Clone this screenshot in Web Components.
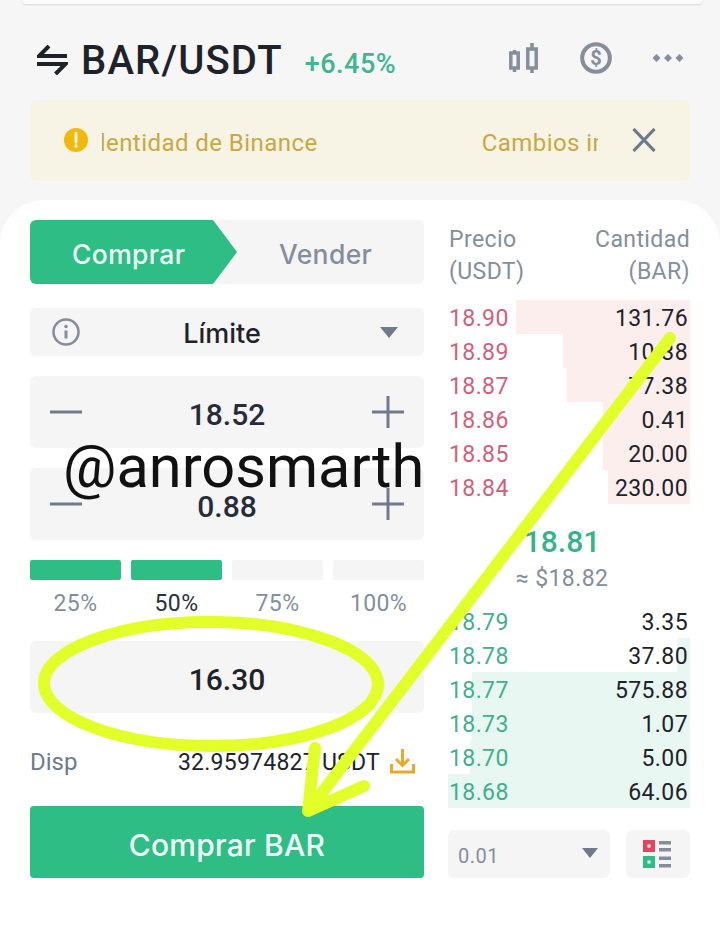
<!DOCTYPE html>
<html lang="es">
<head>
<meta charset="utf-8">
<title>BAR/USDT</title>
<style>
  html, body { margin: 0; padding: 0; background: #f6f6f7; }
  body { font-family: Roboto, "Liberation Sans", sans-serif; color: #1e2329; }
</style>
</head>
<body>
<trade-page></trade-page>

<script>
function define(name, html) {
  const tpl = document.createElement('template');
  tpl.innerHTML = html;
  customElements.define(name, class extends HTMLElement {
    connectedCallback() {
      const root = this.attachShadow({ mode: 'open' });
      root.appendChild(tpl.content.cloneNode(true));
      // attributes fill the [data-attr] holes in the template
      root.querySelectorAll('[data-attr]').forEach(n => {
        n.textContent = this.getAttribute(n.dataset.attr) || '';
      });
      if (this.hasAttribute('depth')) this.style.setProperty('--depth', this.getAttribute('depth') + 'px');
    }
  });
}

define('top-bar', `
<style>
  :host { display: flex; align-items: center; height: 40px; padding: 36px 36px 0 37px; }
  .swap { width: 31px; height: 30px; margin-right: 13px; }
  .pair { font-size: 40px; font-weight: 500; letter-spacing: 1.15px; line-height: 40px; margin-top: 2px; color: #1e2329; }
  .chg { font-size: 27px; font-weight: 500; color: #3fb68f; margin: 8px 0 0 22px; letter-spacing: .5px; }
  .icons { margin-left: auto; margin-top: -5px; display: flex; align-items: center; }
  .candle { width: 29px; height: 30px; }
  .usd { width: 32px; height: 32px; margin-left: 42px; }
  .dots { width: 32px; height: 10px; margin-left: 40px; }
</style>
<svg class="swap" viewBox="0 0 31 30" fill="none" stroke="#1e2329" stroke-width="4">
  <path d="M30 11H2L12 1"/><path d="M0 19h28.500L18.500 29"/>
</svg>
<span class="pair">BAR/USDT</span>
<span class="chg">+6.45%</span>
<div class="icons">
  <svg class="candle" viewBox="0 0 29 30" fill="none" stroke="#848e9c">
    <path d="M5.500 7v22M23 0v30" stroke-width="3.500"/>
    <rect x="1.800" y="10" width="7.400" height="15" stroke-width="3.500" fill="#f6f6f7"/>
    <rect x="18.800" y="6" width="8.400" height="19" stroke-width="3.500" fill="#f6f6f7"/>
  </svg>
  <svg class="usd" viewBox="0 0 32 32">
    <circle cx="16" cy="16" r="13.800" fill="none" stroke="#848e9c" stroke-width="4"/>
    <text x="16" y="23" font-size="20" font-family="Roboto" font-weight="700" text-anchor="middle" fill="#848e9c">$</text>
  </svg>
  <svg class="dots" viewBox="0 0 32 10" fill="#848e9c">
    <path d="M4.500 1l4 4-4 4-4-4zM16 1l4 4-4 4-4-4zM27.500 1l4 4-4 4-4-4z"/>
  </svg>
</div>
`);

define('notice-bar', `
<style>
  :host { display: flex; align-items: center; height: 81px; margin: 20px 30px 19px; padding-left: 34px; padding-right: 34px;
          background: #f7f4e5; border-radius: 6px; box-sizing: border-box; }
  .warn { width: 24px; height: 24px; flex: none; margin: -1px 14px 0 0; }
  .clip { flex: none; width: 496px; overflow: hidden; white-space: nowrap; font-size: 24px; color: #c9a842; letter-spacing: .45px; margin-top: 4px; }
  .clip span { display: inline-block; }
  .a { margin-left: -17px; }
  .b { margin-left: 164px; }
  .x { width: 24px; height: 24px; flex: none; margin: -1px 0 0 34px; }
</style>
<svg class="warn" viewBox="0 0 24 24">
  <circle cx="12" cy="12" r="12" fill="#f0b90b"/>
  <path d="M12 5v9" stroke="#f7f4e5" stroke-width="3" stroke-linecap="round"/>
  <circle cx="12" cy="18" r="1.700" fill="#f7f4e5"/>
</svg>
<div class="clip"><span class="a">Identidad de Binance</span><span class="b">Cambios importantes</span></div>
<svg class="x" viewBox="0 0 24 24" fill="none" stroke="#707a8a" stroke-width="3.2"><path d="M1.500 1l21 22M22.500 1l-21 22"/></svg>
`);

define('side-tabs', `
<style>
  :host { display: flex; height: 64px; background: #f5f5f6; border-radius: 6px; font-family: Inter, Roboto, sans-serif; font-size: 26.5px; font-weight: 500; letter-spacing: .35px; }
  .buy { width: 207px; display: flex; align-items: center; padding: 4px 0 0 42px; box-sizing: border-box; color: #f2fff9; background: #2ebd85;
         border-radius: 6px 0 0 6px; clip-path: polygon(0 0, 183px 0, 207px 50%, 183px 100%, 0 100%); }
  .sell { flex: 1; display: flex; align-items: center; padding: 4px 0 0 42px; color: #848e9c; }
</style>
<div class="buy">Comprar</div><div class="sell">Vender</div>
`);

define('type-select', `
<style>
  :host { display: flex; align-items: center; height: 48px; background: #f5f5f6; border-radius: 6px; padding: 0 26px 0 22px; font-family: Inter, Roboto, sans-serif; font-size: 27px; }
  svg.i { width: 28px; height: 28px; flex: none; }
  .t { flex: 1; text-align: center; padding-right: 16px; margin-top: 3px; font-weight: 500; color: #1e2329; }
  svg.c { width: 18px; height: 11px; flex: none; }
</style>
<svg class="i" viewBox="0 0 28 28"><circle cx="14" cy="14" r="12.500" fill="none" stroke="#848e9c" stroke-width="2.600"/><path d="M14 12.500v8" stroke="#848e9c" stroke-width="3"/><circle cx="14" cy="8.500" r="1.800" fill="#848e9c"/></svg>
<span class="t">Límite</span>
<svg class="c" viewBox="0 0 18 11"><path d="M0 0h18L9 11z" fill="#707a8a"/></svg>
`);

define('num-stepper', `
<style>
  :host { display: flex; align-items: center; height: 72px; background: #f5f5f6; border-radius: 6px; padding: 0 20px; }
  svg { width: 32px; height: 32px; flex: none; margin-top: -1px; }
  span { flex: 1; text-align: center; font-size: 30px; font-weight: 500; margin-top: 5px; color: #262c3a; }
</style>
<svg viewBox="0 0 32 32"><path d="M0 16h32" stroke="#707a8a" stroke-width="3"/></svg>
<span data-attr="value"></span>
<svg viewBox="0 0 32 32"><path d="M0 16h32M16 0v32" stroke="#707a8a" stroke-width="3"/></svg>
`);

define('pct-slider', `
<style>
  :host { display: grid; grid-template-columns: repeat(4, 1fr); column-gap: 10px; row-gap: 13px; font-size: 23px; color: #848e9c; text-align: center; }
  i { display: block; height: 20px; background: #f5f5f6; border-radius: 2px; }
  i.on { background: #2ebd85; }
  .cur { color: #2b3139; }
  span { line-height: 22px; letter-spacing: .4px; }
</style>
<i class="on"></i><i class="on"></i><i></i><i></i>
<span>25%</span><span class="cur">50%</span><span>75%</span><span>100%</span>
`);

define('total-input', `
<style>
  :host { display: flex; align-items: center; justify-content: center; height: 72px; background: #f5f5f6; border-radius: 6px;
          font-size: 30px; font-weight: 500; color: #1e2329; }
  span { margin-top: 5px; }
</style>
<span data-attr="value"></span>
`);

define('avail-row', `
<style>
  :host { display: flex; align-items: center; height: 44px; font-size: 24px; color: #707a8a; }
  .v { margin-left: auto; color: #1e2329; font-size: 23px; letter-spacing: .25px; }
  svg { width: 25px; height: 25px; margin: -2px 9px 0 10px; }
</style>
<span>Disp</span>
<span class="v">32.95974827 USDT</span>
<svg viewBox="0 0 25 25" fill="none" stroke="#e9a92a" stroke-width="3"><path d="M1.500 15v8h22v-8M12.500 0v16M6 10l6.500 6.500L19 10"/></svg>
`);

define('buy-button', `
<style>
  :host { display: flex; align-items: center; justify-content: center; height: 72px; box-sizing: border-box; padding-top: 6px; background: #2ebd85; border-radius: 4px;
          color: #f2fff9; font-family: Inter, Roboto, sans-serif; font-size: 30px; font-weight: 500; letter-spacing: .25px; }
</style>
<slot></slot>
`);

define('order-form', `
<style>
  :host { display: flex; flex-direction: column; width: 394px; flex: none; position: relative; }
  side-tabs { margin-bottom: 24px; }
  type-select { margin-bottom: 20px; }
  num-stepper { margin-bottom: 20px; }
  pct-slider { margin-bottom: 26px; }
  avail-row { margin: 27px 0 22px; }
  .mark { position: absolute; left: 33px; top: 212px; font-size: 59.5px; line-height: 70px; color: #111; white-space: nowrap; }
</style>
<side-tabs></side-tabs>
<type-select></type-select>
<num-stepper value="18.52"></num-stepper>
<num-stepper value="0.88"></num-stepper>
<pct-slider></pct-slider>
<total-input value="16.30"></total-input>
<avail-row></avail-row>
<buy-button>Comprar BAR</buy-button>
<div class="mark">@anrosmarth</div>
`);

define('book-row', `
<style>
  :host { display: flex; justify-content: space-between; align-items: center; height: 34px; font-size: 23px; letter-spacing: .4px;
          padding: 0 2px 0 1px; --c: #d0617a; --bg: #fdeeee;
          background: linear-gradient(to left, var(--bg) var(--depth, 0), transparent var(--depth, 0)); }
  :host([side=buy]) { --c: #3fb08c; --bg: #e9f7f2; }
  .p { color: var(--c); margin-top: 2px; }
  .q { color: #1e2329; margin-top: 2px; }
</style>
<span class="p" data-attr="price"></span><span class="q" data-attr="qty"></span>
`);

define('book-head', `
<style>
  :host { display: flex; justify-content: space-between; font-size: 23px; line-height: 32px; color: #848e9c; letter-spacing: .4px; padding: 4px 0 0 1px; }
  .r { text-align: right; }
</style>
<div>Precio<br>(USDT)</div><div class="r">Cantidad<br>(BAR)</div>
`);

define('book-mid', `
<style>
  :host { display: flex; flex-direction: column; align-items: center; padding: 21px 14px 0 0; height: 80px; box-sizing: border-box; margin-bottom: 20px; }
  b { font-size: 30px; line-height: 34px; font-weight: 500; color: #35b38a; }
  span { font-size: 23px; line-height: 36px; margin-top: 2px; color: #848e9c; letter-spacing: .4px; }
</style>
<b data-attr="price"></b><span data-attr="fiat"></span>
`);

define('book-footer', `
<style>
  :host { display: flex; gap: 16px; height: 48px; margin-top: 22px; }
  .sel { flex: 1; background: #f5f5f6; border-radius: 6px; display: flex; align-items: center; justify-content: space-between;
         padding: 0 12px 0 10px; font-size: 20px; color: #848e9c; letter-spacing: .5px; }
  .sel span { margin-top: 4px; }
  .sel svg { width: 16px; height: 10px; margin-top: -2px; }
  .btn { width: 64px; background: #f5f5f6; border-radius: 6px; display: flex; align-items: center; justify-content: center; }
  .btn svg { width: 28px; height: 28px; margin: -1px 2px 0 0; }
</style>
<div class="sel"><span>0.01</span><svg viewBox="0 0 16 10"><path d="M0 0h16L8 10z" fill="#707a8a"/></svg></div>
<div class="btn"><svg viewBox="0 0 28 28">
  <path fill="#e0465e" d="M0 0h12v12H0z"/><path fill="#fff" d="M4.500 4.500h3v3h-3z"/>
  <path fill="#2ebd85" d="M0 16h12v12H0z"/><path fill="#fff" d="M4.500 20.500h3v3h-3z"/>
  <path fill="#848e9c" d="M16 1h12v3.500H16zM16 8h12v3.500H16zM16 16.500h12V20H16zM16 24h12v3.500H16z"/>
</svg></div>
`);

define('order-book', `
<style>
  :host { display: block; width: 242px; flex: none; }
  book-head { margin-bottom: 12px; }
</style>
<book-head></book-head>
<book-row price="18.90" qty="131.76" depth="174"></book-row>
<book-row price="18.89" qty="10.38" depth="127"></book-row>
<book-row price="18.87" qty="77.38" depth="123"></book-row>
<book-row price="18.86" qty="0.41" depth="87"></book-row>
<book-row price="18.85" qty="20.00" depth="87"></book-row>
<book-row price="18.84" qty="230.00" depth="82"></book-row>
<book-mid price="18.81" fiat="≈ $18.82"></book-mid>
<book-row side="buy" price="18.79" qty="3.35" depth="0"></book-row>
<book-row side="buy" price="18.78" qty="37.80" depth="13"></book-row>
<book-row side="buy" price="18.77" qty="575.88" depth="218"></book-row>
<book-row side="buy" price="18.73" qty="1.07" depth="218"></book-row>
<book-row side="buy" price="18.70" qty="5.00" depth="220"></book-row>
<book-row side="buy" price="18.68" qty="64.06" depth="244"></book-row>
<book-footer></book-footer>
`);

define('trade-page', `
<style>
  :host { display: block; position: relative; width: 720px; height: 933px; overflow: hidden; }
  .edge { height: 4px; margin: 0 18px 0 22px; background: #fbfbfc; border-radius: 0 0 8px 8px; box-shadow: 0 1px 2px rgba(0,0,0,.12); }
  .panel { display: flex; justify-content: space-between; height: 733px; box-sizing: border-box; padding: 20px 30px 0; background: #fff; border-radius: 44px 44px 0 0; }
  .ink { position: absolute; left: 0; top: 0; width: 720px; height: 933px; pointer-events: none; }
</style>
<div class="edge"></div>
<top-bar></top-bar>
<notice-bar></notice-bar>
<div class="panel">
  <order-form></order-form>
  <order-book></order-book>
</div>
<svg class="ink" viewBox="0 0 720 933" fill="none" stroke="#e2ff2a" stroke-linecap="round" stroke-linejoin="round">
  <path stroke-width="12" d="M213 622C120 621 44 650 44 683C44 717 118 746 213 746C300 746 378 720 378 684C378 650 300 622 213 622Z"/>
  <path stroke-width="12" d="M670 338L308 811M315 748L308 811L364 786"/>
</svg>
`);
</script>
</body>
</html>
